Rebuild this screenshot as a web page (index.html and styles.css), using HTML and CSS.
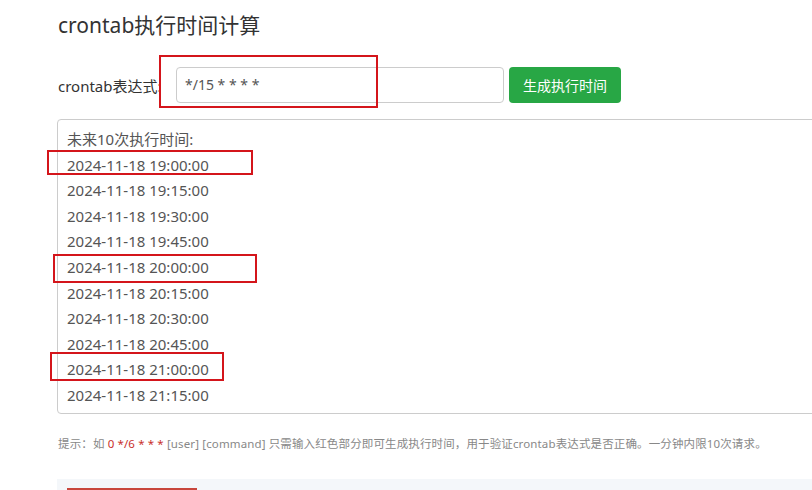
FILE: index.html
```html
<!DOCTYPE html>
<html lang="zh-CN">
<head>
<meta charset="utf-8">
<title>crontab执行时间计算</title>
<link rel="stylesheet" href="styles.css">
</head>
<body>
<div class="page">
  <h2 class="title">crontab执行时间计算</h2>
  <div class="form-row">
    <label class="label">crontab表达式:</label>
    <div class="input">*/15 * * * *</div>
    <button class="btn">生成执行时间</button>
  </div>
  <div class="result">
    <div class="line">未来10次执行时间:</div>
    <div class="line">2024-11-18 19:00:00</div>
    <div class="line">2024-11-18 19:15:00</div>
    <div class="line">2024-11-18 19:30:00</div>
    <div class="line">2024-11-18 19:45:00</div>
    <div class="line">2024-11-18 20:00:00</div>
    <div class="line">2024-11-18 20:15:00</div>
    <div class="line">2024-11-18 20:30:00</div>
    <div class="line">2024-11-18 20:45:00</div>
    <div class="line">2024-11-18 21:00:00</div>
    <div class="line">2024-11-18 21:15:00</div>
  </div>
  <p class="tip">提示：如 <span class="red">0 */6 * * *</span> [user] [command] 只需输入红色部分即可生成执行时间，用于验证crontab表达式是否正确。一分钟内限10次请求。</p>
  <div class="bottom"><div class="redbar"></div></div>
</div>
<div class="mark mark1"></div>
<div class="mark mark2"></div>
<div class="mark mark3"></div>
<div class="mark mark4"></div>
</body>
</html>
```
FILE: styles.css
```css
html, body {
  margin: 0;
  padding: 0;
  background: #fff;
  overflow: hidden;
}
body {
  width: 812px;
  height: 490px;
  position: relative;
  font-family: "Noto Sans", "Noto Sans CJK SC", sans-serif;
  color: #555;
}
.page {
  padding-left: 57px;
  width: 900px;
}
.title {
  margin: 10px 0 0 1px;
  font-size: 21px;
  font-weight: normal;
  line-height: 30px;
  color: #333;
}
.form-row {
  display: flex;
  align-items: center;
  margin-top: 27px;
  height: 36px;
}
.label {
  flex: 0 0 118px;
  margin-left: 1px;
  font-size: 15px;
  color: #333;
}
.input {
  box-sizing: border-box;
  width: 328px;
  height: 36px;
  border: 1px solid #ccc;
  border-radius: 4px;
  padding: 0 8px;
  font-size: 14px;
  line-height: 34px;
  color: #555;
}
.btn {
  margin-left: 5px;
  width: 112px;
  height: 36px;
  border: none;
  border-radius: 4px;
  background: #28a745;
  color: #fff;
  font-family: "Noto Sans", "Noto Sans CJK SC", sans-serif;
  font-size: 14px;
  padding: 0;
}
.result {
  margin-top: 16px;
  width: 820px;
  border: 1px solid #ccc;
  border-radius: 4px;
  padding: 7px 9px 4px;
  font-size: 15px;
  line-height: 25.6px;
  color: #555;
}
.tip {
  margin: 20px 0 0 1px;
  font-size: 11.5px;
  letter-spacing: 0.13px;
  line-height: 20px;
  color: #888;
}
.red {
  color: #c9302c;
}
.bottom {
  margin-top: 25px;
  height: 30px;
  background: #f4f7fa;
  padding-left: 10px;
  padding-top: 9px;
  box-sizing: border-box;
}
.redbar {
  width: 130px;
  height: 10px;
  background: #c8463c;
}
.mark {
  position: absolute;
  border: 2px solid #d4151b;
  box-sizing: border-box;
}
.mark1 { left: 159px; top: 55px; width: 219px; height: 53px; }
.mark2 { left: 47px; top: 150px; width: 206px; height: 25px; }
.mark3 { left: 53px; top: 254px; width: 204px; height: 29px; }
.mark4 { left: 50px; top: 352px; width: 174px; height: 29px; }
```
